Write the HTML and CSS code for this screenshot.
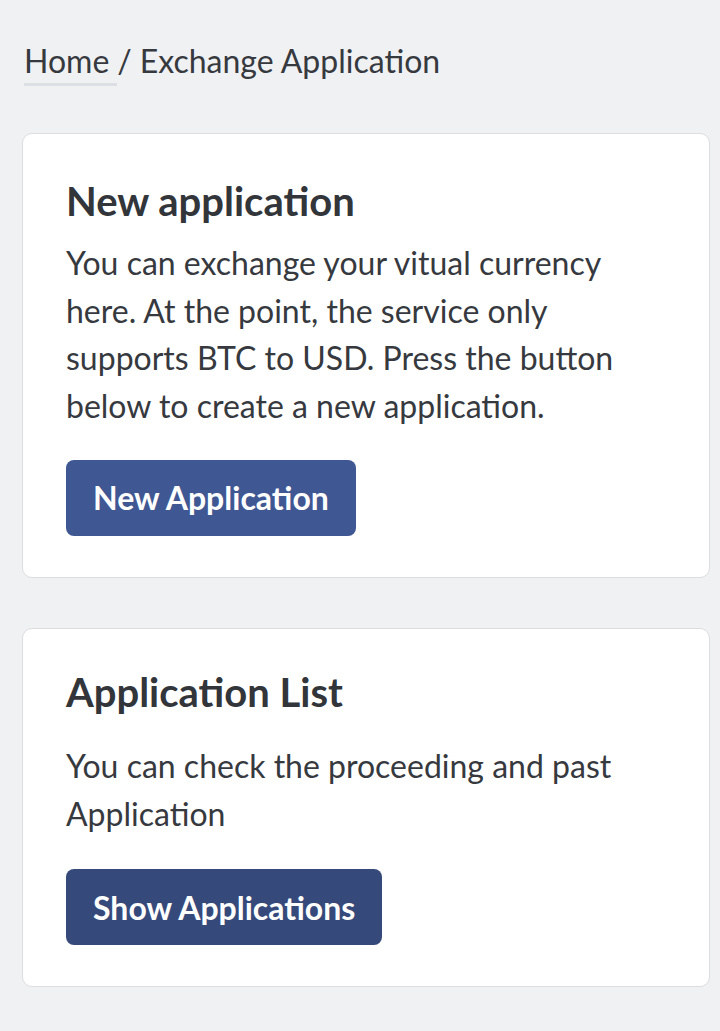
FILE: index.html
```html
<!DOCTYPE html>
<html lang="en">
<head>
<meta charset="utf-8">
<title>Exchange Application</title>
<link rel="stylesheet" href="styles.css">
</head>
<body>
<main class="page">
  <nav class="breadcrumb">
    <a class="crumb-link" href="#">Home</a>
    <span class="crumb-sep">/</span>
    <span class="crumb-current">Exchange Application</span>
  </nav>

  <section class="card card-new">
    <h2 class="card-title">New application</h2>
    <p class="card-text">You can exchange your vitual currency here. At the point, the service only supports BTC to USD. Press the button below to create a new application.</p>
    <button class="btn btn-primary">New Application</button>
  </section>

  <section class="card card-list">
    <h2 class="card-title">Application List</h2>
    <p class="card-text">You can check the proceeding and past Application</p>
    <button class="btn btn-dark">Show Applications</button>
  </section>
</main>
</body>
</html>
```

FILE: styles.css
```css
html, body {
  margin: 0;
  padding: 0;
  background: #f0f1f3;
}

body {
  font-family: Lato, "Open Sans", sans-serif;
  color: #36393e;
}

.page {
  padding: 38px 10px 40px 22px;
  display: flex;
  flex-direction: column;
}

.breadcrumb {
  font-size: 32px;
  line-height: 46px;
  display: flex;
  align-items: baseline;
  gap: 8px;
  margin-bottom: 47px;
  padding-left: 2px;
}

.crumb-link {
  color: #36393e;
  text-decoration: none;
  border-bottom: 3px solid #dcdfe4;
  padding-right: 8px;
  margin-right: -8px;
  line-height: 44px;
}

.crumb-sep,
.crumb-current {
  color: #36393e;
}

.card {
  background: #ffffff;
  border: 1px solid #dcdde0;
  border-radius: 10px;
  padding: 42px 43px 41px 43px;
  display: flex;
  flex-direction: column;
  align-items: flex-start;
}

.card + .card {
  margin-top: 50px;
}

.card-list {
  padding-top: 38px;
  padding-bottom: 41px;
}

.card-title {
  margin: 0;
  font-size: 40px;
  font-weight: 700;
  line-height: 50px;
  color: #323539;
}

.card-new .card-title {
  margin-bottom: 13px;
}

.card-list .card-title {
  margin-bottom: 25px;
}

.card-text {
  margin: 0 0 30px 0;
  font-size: 32px;
  line-height: 47.7px;
  color: #36393e;
}

.card-list .card-text {
  margin-bottom: 32px;
}

.btn {
  font-family: Lato, "Open Sans", sans-serif;
  font-size: 32px;
  font-weight: 700;
  color: #ffffff;
  border: none;
  border-radius: 8px;
  height: 76px;
  padding: 0 27px;
  cursor: pointer;
}

.btn-primary {
  background: #3f5793;
}

.btn-dark {
  background: #354a7a;
}
```
